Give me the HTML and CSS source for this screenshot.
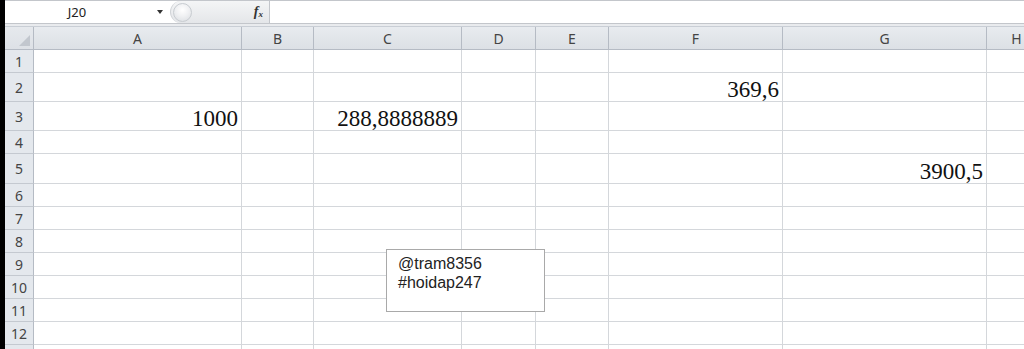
FILE: index.html
```html
<!DOCTYPE html>
<html lang="vi">

<head>
    <meta charset="UTF-8">
    <meta name="viewport" content="width=device-width, initial-scale=1.0">
    <title>Book1 - Excel</title>
    <link rel="stylesheet" href="styles.css">
</head>

<body>
    <div id="window">
        <!-- Thanh công thức -->
        <div id="formulaBar">
            <div class="name-box">
                <span class="name-text">J20</span>
                <span class="name-arrow"></span>
            </div>
            <div class="fx-area">
                <span class="knob"></span>
                <span class="fx">f<sub>x</sub></span>
            </div>
            <div class="formula-input"></div>
        </div>
        <div class="bar-gap"></div>

        <!-- Bảng tính -->
        <div id="sheet">
            <div class="corner"></div>
            <div class="col-head">A</div>
            <div class="col-head">B</div>
            <div class="col-head">C</div>
            <div class="col-head">D</div>
            <div class="col-head">E</div>
            <div class="col-head">F</div>
            <div class="col-head">G</div>
            <div class="col-head">H</div>

            <div class="row-head">1</div>
            <div class="cell"></div><div class="cell"></div><div class="cell"></div><div class="cell"></div>
            <div class="cell"></div><div class="cell"></div><div class="cell"></div><div class="cell"></div>

            <div class="row-head">2</div>
            <div class="cell"></div><div class="cell"></div><div class="cell"></div><div class="cell"></div>
            <div class="cell"></div><div class="cell num">369,6</div><div class="cell"></div><div class="cell"></div>

            <div class="row-head">3</div>
            <div class="cell num">1000</div><div class="cell"></div><div class="cell num">288,8888889</div><div class="cell"></div>
            <div class="cell"></div><div class="cell"></div><div class="cell"></div><div class="cell"></div>

            <div class="row-head">4</div>
            <div class="cell"></div><div class="cell"></div><div class="cell"></div><div class="cell"></div>
            <div class="cell"></div><div class="cell"></div><div class="cell"></div><div class="cell"></div>

            <div class="row-head">5</div>
            <div class="cell"></div><div class="cell"></div><div class="cell"></div><div class="cell"></div>
            <div class="cell"></div><div class="cell"></div><div class="cell num">3900,5</div><div class="cell"></div>

            <div class="row-head">6</div>
            <div class="cell"></div><div class="cell"></div><div class="cell"></div><div class="cell"></div>
            <div class="cell"></div><div class="cell"></div><div class="cell"></div><div class="cell"></div>

            <div class="row-head">7</div>
            <div class="cell"></div><div class="cell"></div><div class="cell"></div><div class="cell"></div>
            <div class="cell"></div><div class="cell"></div><div class="cell"></div><div class="cell"></div>

            <div class="row-head">8</div>
            <div class="cell"></div><div class="cell"></div><div class="cell"></div><div class="cell"></div>
            <div class="cell"></div><div class="cell"></div><div class="cell"></div><div class="cell"></div>

            <div class="row-head">9</div>
            <div class="cell"></div><div class="cell"></div><div class="cell"></div><div class="cell"></div>
            <div class="cell"></div><div class="cell"></div><div class="cell"></div><div class="cell"></div>

            <div class="row-head">10</div>
            <div class="cell"></div><div class="cell"></div><div class="cell"></div><div class="cell"></div>
            <div class="cell"></div><div class="cell"></div><div class="cell"></div><div class="cell"></div>

            <div class="row-head">11</div>
            <div class="cell"></div><div class="cell"></div><div class="cell"></div><div class="cell"></div>
            <div class="cell"></div><div class="cell"></div><div class="cell"></div><div class="cell"></div>

            <div class="row-head">12</div>
            <div class="cell"></div><div class="cell"></div><div class="cell"></div><div class="cell"></div>
            <div class="cell"></div><div class="cell"></div><div class="cell"></div><div class="cell"></div>

            <div class="row-head"></div>
            <div class="cell"></div><div class="cell"></div><div class="cell"></div><div class="cell"></div>
            <div class="cell"></div><div class="cell"></div><div class="cell"></div><div class="cell"></div>

            <!-- Hộp văn bản nổi trên lưới -->
            <div class="text-box">@tram8356<br>#hoidap247</div>
        </div>
    </div>
</body>

</html>
```

FILE: styles.css
```css
body {
    margin: 0;
    padding: 0;
    background-color: #000;
    overflow: hidden;
    font-family: "Noto Sans", "Open Sans", sans-serif;
}

#window {
    margin-left: 5px;
    height: 349px;
    background-color: #fff;
    overflow: hidden;
}

/* Thanh công thức */
#formulaBar {
    display: flex;
    height: 22px;
    border-top: 1px solid #c3c6cb;
    border-bottom: 1px solid #c3c6cb;
    background-color: #fff;
}

.name-box {
    width: 165px;
    display: flex;
    align-items: center;
}

.name-text {
    flex: 1;
    text-align: center;
    font-size: 13px;
    color: #222;
    padding-right: 8px;
}

.name-arrow {
    width: 0;
    height: 0;
    margin-right: 7px;
    border-left: 3px solid transparent;
    border-right: 3px solid transparent;
    border-top: 4px solid #333;
}

.fx-area {
    width: 92px;
    display: flex;
    align-items: center;
    justify-content: space-between;
    background: linear-gradient(#f4f5f6, #e4e6e9);
    border-left: 1px solid #d0d3d7;
    border-radius: 11px 0 0 11px;
    padding-right: 6px;
}

.knob {
    width: 17px;
    height: 17px;
    margin-left: 2px;
    border-radius: 50%;
    border: 1px solid #c8ccd1;
    background: radial-gradient(circle at 50% 35%, #fff 0%, #f0f1f3 45%, #d9dce0 100%);
}

.fx {
    font-family: "Liberation Serif", serif;
    font-style: italic;
    font-weight: bold;
    font-size: 14px;
    color: #333;
}

.fx sub {
    font-size: 9px;
    vertical-align: -1px;
}

.formula-input {
    flex: 1;
    border-left: 1px solid #c3c6cb;
    background-color: #fff;
}

.bar-gap {
    height: 2px;
    background-color: #e9ebee;
    border-bottom: 1px solid #c9ced5;
}

/* Bảng tính */
#sheet {
    position: relative;
    display: grid;
    grid-template-columns: 29px 208px 72px 148px 74px 73px 174px 204px 60px;
    grid-template-rows: 23px 23px 29px 29px 23px 30px repeat(8, 23px);
}

.corner,
.col-head,
.row-head,
.cell {
    box-sizing: border-box;
    border-right: 1px solid #d4d7db;
    border-bottom: 1px solid #d4d7db;
}

.corner {
    position: relative;
    background: linear-gradient(#e6e9ed, #dde1e6);
    border-right-color: #b5bbc4;
    border-bottom-color: #b5bbc4;
}

.corner::after {
    content: "";
    position: absolute;
    right: 3px;
    bottom: 3px;
    border-left: 11px solid transparent;
    border-bottom: 11px solid #c2c7ce;
}

.col-head {
    display: flex;
    align-items: center;
    justify-content: center;
    background: linear-gradient(#e8ebef, #dce0e5);
    border-right-color: #b5bbc4;
    border-bottom-color: #b5bbc4;
    color: #444;
    font-size: 14px;
}

.row-head {
    display: flex;
    align-items: center;
    justify-content: center;
    background-color: #e4e8ed;
    border-right-color: #b5bbc4;
    border-bottom-color: #c4c9d0;
    color: #444;
    font-size: 14px;
}

.cell {
    background-color: #fff;
}

.num {
    display: flex;
    align-items: flex-end;
    justify-content: flex-end;
    padding-right: 3px;
    font-family: "Liberation Serif", "Times New Roman", serif;
    font-size: 23px;
    line-height: 23px;
    color: #111;
}

.text-box {
    position: absolute;
    left: 381px;
    top: 222px;
    width: 159px;
    height: 63px;
    box-sizing: border-box;
    padding: 4px 11px;
    background-color: #fff;
    border: 1px solid #a9a9a9;
    font-family: "Liberation Sans", Arial, sans-serif;
    font-size: 16px;
    line-height: 19px;
    color: #222;
}
```
